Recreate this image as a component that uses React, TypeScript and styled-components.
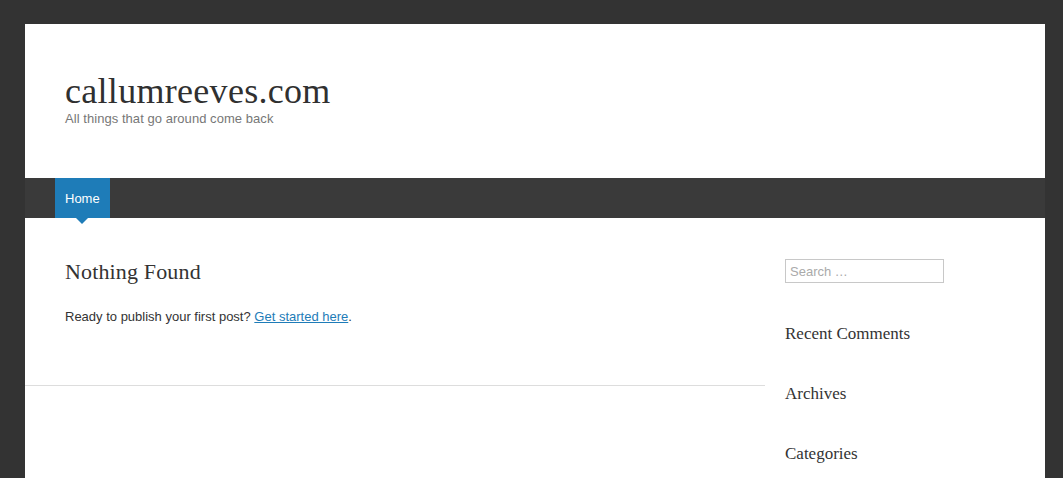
import React from 'react';
import styled, { createGlobalStyle } from 'styled-components';

const GlobalStyle = createGlobalStyle`
	html, body {
		margin: 0;
		padding: 0;
		background: #333333;
	}
	body {
		font-family: "Liberation Sans", Arial, sans-serif;
		color: #333;
	}
`;

const Page = styled.div`
	width: 1020px;
	margin: 24px 0 0 25px;
	background: #fff;
	min-height: 454px;
`;

const Header = styled.header`
	height: 154px;
	box-sizing: border-box;
	padding: 50px 40px 0;
`;

const SiteTitle = styled.h1`
	margin: 0;
	font-family: "Liberation Serif", Georgia, serif;
	font-weight: normal;
	font-size: 36px;
	letter-spacing: 0.3px;
	line-height: 34px;
	color: #303030;
`;

const Tagline = styled.p`
	margin: 4px 0 0;
	font-size: 13px;
	letter-spacing: 0.05px;
	line-height: 13px;
	color: #777;
`;

const NavBar = styled.nav`
	height: 40px;
	background: #3a3a3a;
	display: flex;
	padding-left: 30px;
`;

const NavItem = styled.a<{ $active?: boolean }>`
	position: relative;
	display: flex;
	align-items: center;
	padding: 0 10px;
	font-size: 13px;
	color: #fff;
	text-decoration: none;
	background: ${p => (p.$active ? '#1e7cb8' : 'transparent')};
	&:after {
		content: '';
		display: ${p => (p.$active ? 'block' : 'none')};
		position: absolute;
		left: 50%;
		bottom: -6px;
		margin-left: -6px;
		border-left: 6px solid transparent;
		border-right: 6px solid transparent;
		border-top: 6px solid #1e7cb8;
	}
`;

const Body = styled.div`
	display: flex;
`;

const Main = styled.main`
	width: 740px;
`;

const Entry = styled.article`
	padding: 40px 40px 58px;
	border-bottom: 1px solid #dddddd;
`;

const EntryTitle = styled.h2`
	margin: 0;
	font-family: "Liberation Serif", Georgia, serif;
	font-weight: normal;
	font-size: 22px;
	letter-spacing: 0.15px;
	line-height: 28px;
	color: #333;
`;

const Text = styled.p`
	margin: 21px 0 0;
	font-size: 13px;
	line-height: 20px;
	color: #333;
`;

const Link = styled.a`
	color: #1e7cb8;
	text-decoration: underline;
`;

const Sidebar = styled.aside`
	flex: 1;
	padding: 41px 20px 0;
	display: flex;
	flex-direction: column;
`;

const SearchInput = styled.input`
	box-sizing: border-box;
	width: 159px;
	height: 24px;
	padding: 2px 4px;
	border: 1px solid #c8c8c8;
	font-family: "Liberation Sans", Arial, sans-serif;
	font-size: 13px;
	color: #333;
	outline: none;
	&::placeholder {
		color: #aaa;
	}
`;

const WidgetTitle = styled.h3`
	margin: 0;
	font-family: "Liberation Serif", Georgia, serif;
	font-weight: normal;
	font-size: 17px;
	line-height: 20px;
	color: #333;
	margin-top: 40px;
	&:first-of-type {
		margin-top: 41px;
	}
`;

const widgets = ['Recent Comments', 'Archives', 'Categories'];

export default function App() {
	return (
		<>
			<GlobalStyle />
			<Page>
				<Header>
					<SiteTitle>callumreeves.com</SiteTitle>
					<Tagline>All things that go around come back</Tagline>
				</Header>
				<NavBar>
					<NavItem $active href="#">Home</NavItem>
				</NavBar>
				<Body>
					<Main>
						<Entry>
							<EntryTitle>Nothing Found</EntryTitle>
							<Text>
								Ready to publish your first post? <Link href="#">Get started here</Link>.
							</Text>
						</Entry>
					</Main>
					<Sidebar>
						<SearchInput placeholder="Search …" />
						{widgets.map(w => (
							<WidgetTitle key={w}>{w}</WidgetTitle>
						))}
					</Sidebar>
				</Body>
			</Page>
		</>
	);
}
